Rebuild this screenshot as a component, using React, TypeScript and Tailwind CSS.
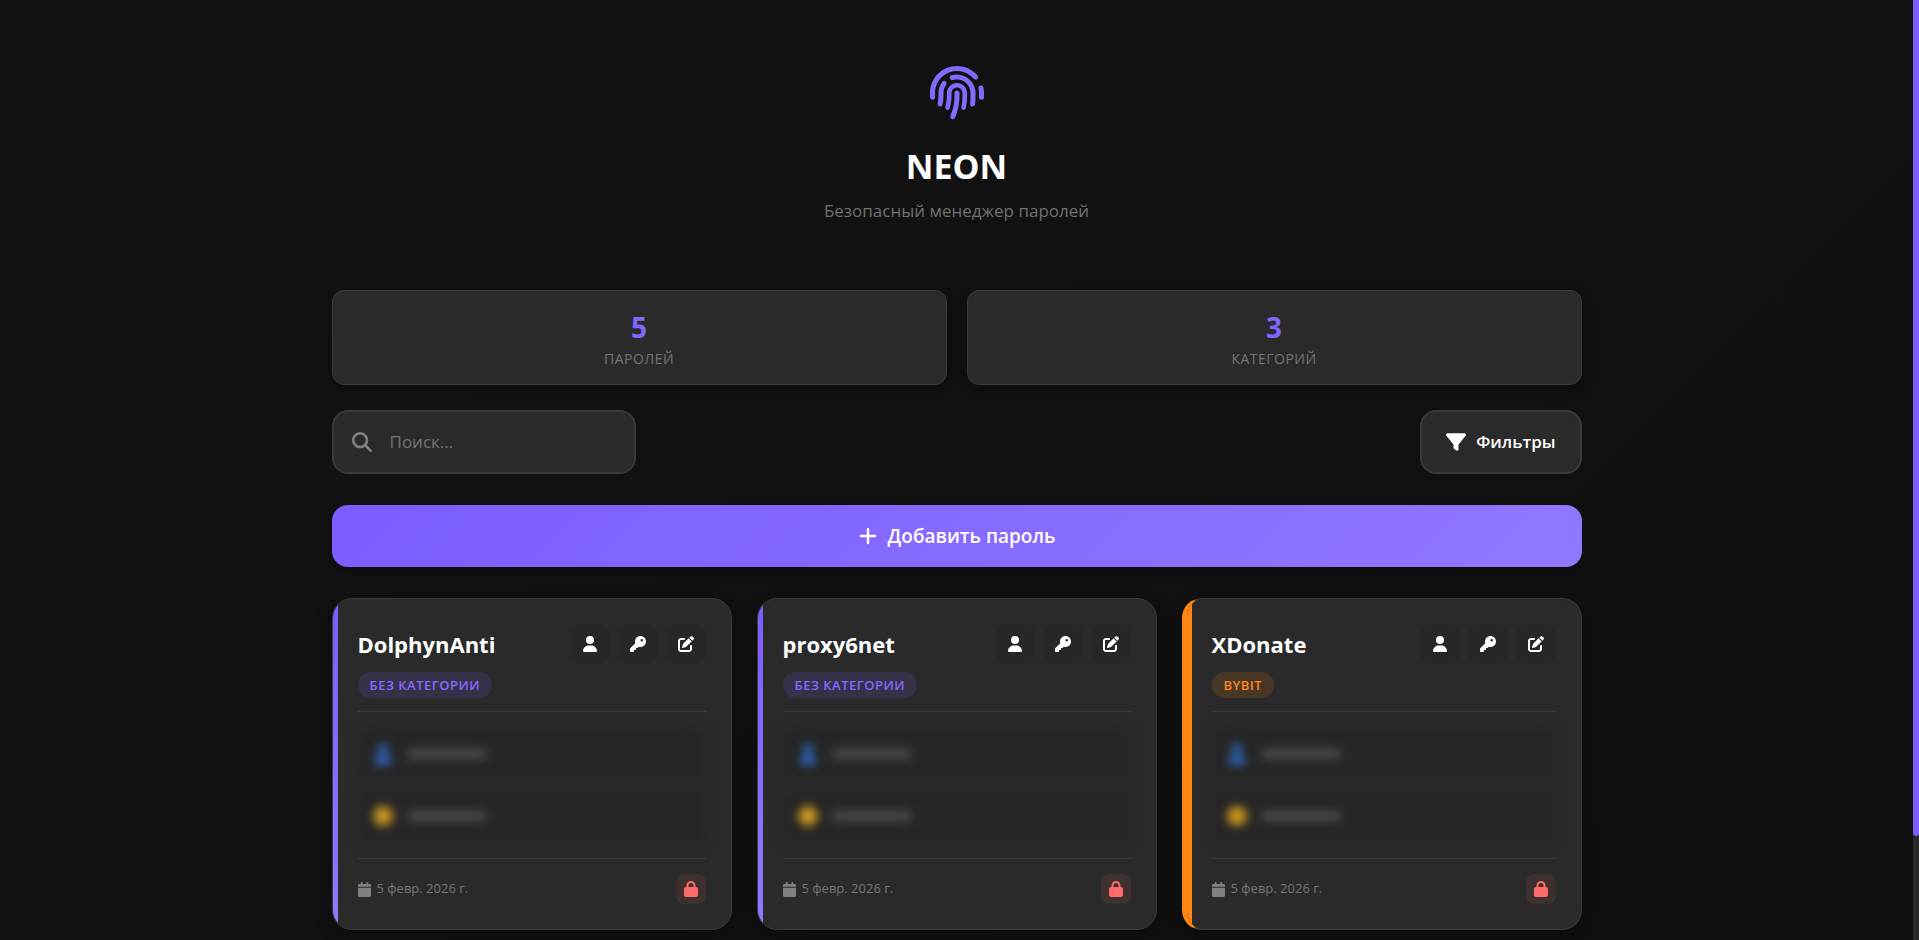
import clsx from "clsx";
import {
  FaCalendar,
  FaFilter,
  FaFingerprint,
  FaKey,
  FaLock,
  FaMagnifyingGlass,
  FaPenToSquare,
  FaPlus,
  FaUser,
} from "react-icons/fa6";

type Entry = {
  name: string;
  category: string;
  date: string;
  accent: "violet" | "orange";
};

const STATS = [
  { value: 5, label: "Паролей" },
  { value: 3, label: "Категорий" },
];

const ENTRIES: Entry[] = [
  { name: "DolphynAnti", category: "Без категории", date: "5 февр. 2026 г.", accent: "violet" },
  { name: "proxy6net", category: "Без категории", date: "5 февр. 2026 г.", accent: "violet" },
  { name: "XDonate", category: "Bybit", date: "5 февр. 2026 г.", accent: "orange" },
];

const ACTIONS = [
  { label: "Скопировать логин", Icon: FaUser },
  { label: "Скопировать пароль", Icon: FaKey },
  { label: "Изменить", Icon: FaPenToSquare },
];

function Header() {
  return (
    <header className="flex flex-col items-center pt-[66px] pb-[67px] text-center">
      <FaFingerprint className="size-[54px] text-[#8768ff]" />
      <h1 className="mt-6 text-[34px] leading-11 font-bold text-white">NEON</h1>
      <p className="mt-[11px] text-[17px] leading-6 text-[#707070]">
        Безопасный менеджер паролей
      </p>
    </header>
  );
}

function Stats() {
  return (
    <section className="grid grid-cols-2 gap-5">
      {STATS.map((stat) => (
        <div
          key={stat.label}
          className="flex flex-col items-center rounded-xl border border-[#3a3a3a] bg-[#2a2a2a] pt-[18px] pb-[15px] shadow-[0_4px_12px_rgba(0,0,0,0.3)]"
        >
          <span className="text-[28px] leading-9 font-bold text-[#8067ff]">{stat.value}</span>
          <span className="mt-1 text-sm leading-5 tracking-[0.5px] text-[#757575] uppercase">
            {stat.label}
          </span>
        </div>
      ))}
    </section>
  );
}

function Toolbar() {
  return (
    <div className="mt-[25px] flex items-center justify-between">
      <label className="flex h-16 w-[304px] items-center gap-[18px] rounded-2xl border-2 border-[#3a3a3a] bg-[#2a2a2a] px-[18px]">
        <FaMagnifyingGlass className="size-5 shrink-0 text-[#808080]" />
        <input
          type="text"
          placeholder="Поиск..."
          aria-label="Поиск"
          className="w-full min-w-0 bg-transparent text-[17px] text-white outline-none placeholder:text-[#757575]"
        />
      </label>
      <button
        type="button"
        className="flex h-16 items-center gap-[10px] rounded-2xl border-2 border-[#3a3a3a] bg-[#2a2a2a] px-6 text-[17px] font-semibold text-white"
      >
        <FaFilter className="size-5" />
        Фильтры
      </button>
    </div>
  );
}

function HiddenRow({ kind }: { kind: "login" | "password" }) {
  return (
    <div className="flex h-[50px] items-center gap-[14px] rounded-xl bg-[#262626] px-[15px] blur-[5px]">
      {kind === "login" ? (
        <FaUser className="size-5 text-[#2f6fd6]" />
      ) : (
        <span className="size-5 rounded-full bg-[#c9951f]" />
      )}
      <span className="h-[10px] w-20 rounded-full bg-[#4a4a4a]" />
    </div>
  );
}

function PasswordCard({ entry }: { entry: Entry }) {
  const orange = entry.accent === "orange";
  return (
    <article
      className={clsx(
        "relative overflow-hidden rounded-[20px] border border-[#3a3a3a] bg-[#2a2a2a] p-[25px] shadow-[0_4px_16px_rgba(0,0,0,0.35)]",
        orange && "border-l-5 border-l-[#ff8812]",
      )}
    >
      <span
        className={clsx(
          "absolute inset-y-0 left-0 w-[5px]",
          orange ? "bg-[#ff8812]" : "bg-linear-to-b from-[#7c5cff] to-[#9277ff]",
        )}
      />
      <div className="flex items-center justify-between">
        <h2 className="text-[22px] leading-10 font-bold text-white">{entry.name}</h2>
        <div className="flex gap-2">
          {ACTIONS.map(({ label, Icon }) => (
            <button
              key={label}
              type="button"
              aria-label={label}
              className="flex size-10 items-center justify-center rounded-xl bg-[#272727] text-white"
            >
              <Icon className="size-4" />
            </button>
          ))}
        </div>
      </div>
      <div className="mt-2 flex border-b border-[#3a3a3a] pb-[13px]">
        <span
          className={clsx(
            "rounded-full px-3 text-[13px] leading-[26px] font-semibold tracking-[0.5px] uppercase",
            orange ? "bg-[#ff8812]/15 text-[#ff8420]" : "bg-[#7c5cff]/15 text-[#8768ff]",
          )}
        >
          {entry.category}
        </span>
      </div>
      <div className="flex flex-col gap-3 py-[17px]">
        <HiddenRow kind="login" />
        <HiddenRow kind="password" />
      </div>
      <footer className="flex items-center justify-between border-t border-[#3a3a3a] pt-[15px]">
        <span className="flex items-center gap-[6px] text-[13px] text-[#757575]">
          <FaCalendar className="h-[15px] w-[13px] text-[#808080]" />
          {entry.date}
        </span>
        <button
          type="button"
          aria-label="Заблокировано"
          className="flex size-[30px] items-center justify-center rounded-lg bg-[#ff6b6b]/10 text-[#ff6b6b]"
        >
          <FaLock className="size-4" />
        </button>
      </footer>
    </article>
  );
}

export default function App() {
  return (
    <div className="flex h-screen overflow-hidden bg-[#111111] bg-linear-135 from-[#121212] to-[#0f0f0f] font-['Segoe_UI','Open_Sans','Noto_Sans',sans-serif]">
      <main className="min-w-0 flex-1 px-6">
        <div className="mx-auto max-w-[1250px]">
          <Header />
          <Stats />
          <Toolbar />
          <button
            type="button"
            className="mt-[31px] flex h-[62px] w-full items-center justify-center gap-[10px] rounded-2xl bg-linear-135 from-[#7c5cff] to-[#9277ff] text-[19px] font-semibold text-white shadow-[0_4px_12px_rgba(0,0,0,0.3)]"
          >
            <FaPlus className="size-5" />
            Добавить пароль
          </button>
          <section className="mt-[31px] grid grid-cols-3 gap-[25px]">
            {ENTRIES.map((entry) => (
              <PasswordCard key={entry.name} entry={entry} />
            ))}
          </section>
        </div>
      </main>
      <div className="w-[6px] shrink-0 bg-[#2a2a2a]">
        <div className="h-8/9 rounded-b-[3px] bg-[#7c5cff]" />
      </div>
    </div>
  );
}
